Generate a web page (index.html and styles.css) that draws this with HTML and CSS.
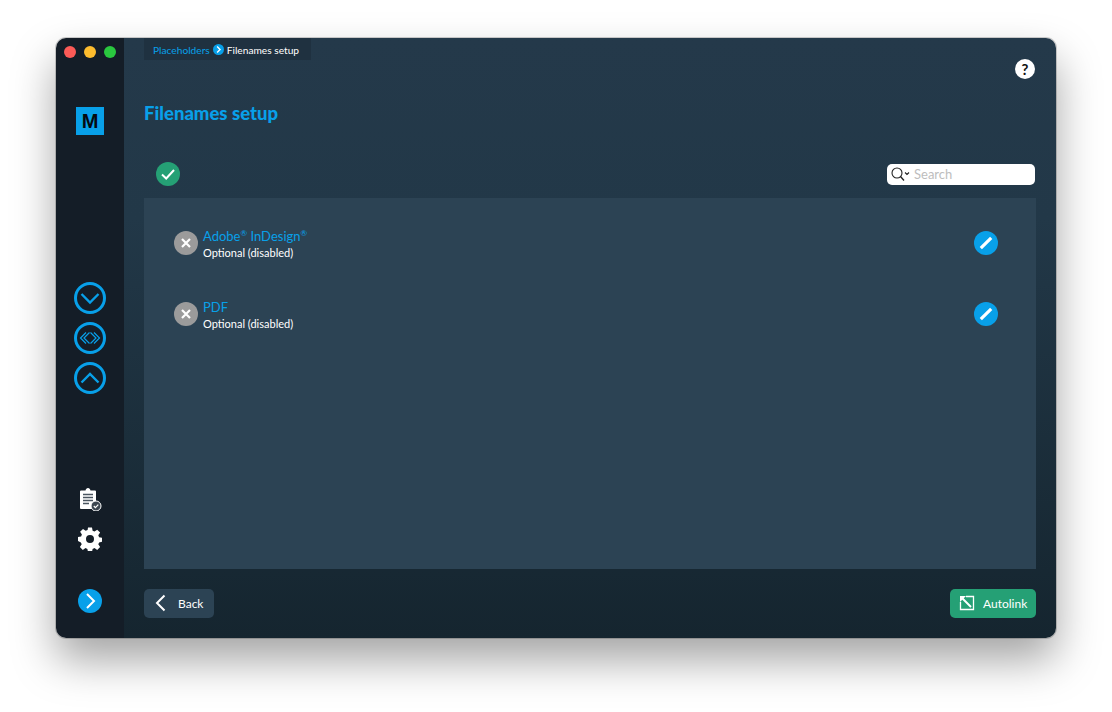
FILE: index.html
```html
<!DOCTYPE html>
<html lang="en">
<head>
  <meta charset="UTF-8" />
  <title>Filenames setup</title>
  <link rel="stylesheet" href="styles.css">
</head>
<body>
  <div class="window">
    <aside class="sidebar">
      <div class="traffic">
        <span class="light red"></span>
        <span class="light yellow"></span>
        <span class="light green"></span>
      </div>
      <div class="logo">M</div>

      <div class="nav-group">
        <svg class="nav-icon" viewBox="0 0 32 32"><circle cx="16" cy="16" r="14.500"/><path d="M7.500 12 16 20.500 24.500 12"/></svg>
        <svg class="nav-icon thin" viewBox="0 0 32 32"><circle cx="16" cy="16" r="14.500"/><path d="M12 10.500 6.500 16 12 21.500M15.500 10.500 10 16 15.500 21.500M20 10.500 25.500 16 20 21.500M16.500 10.500 22 16 16.500 21.500"/></svg>
        <svg class="nav-icon" viewBox="0 0 32 32"><circle cx="16" cy="16" r="14.500"/><path d="M7.500 20.500 16 12 24.500 20.500"/></svg>
      </div>

      <div class="tool-group">
        <svg class="clipboard" viewBox="0 0 24 24" width="24" height="24">
          <path fill="#fff" d="M3 3.500h4.500C7.800 2 8.700 1 10 1s2.200 1 2.500 2.500H17a1 1 0 0 1 1 1V22H3a1 1 0 0 1-1-1V4.500a1 1 0 0 1 1-1z"/>
          <path stroke="#4a5560" stroke-width="1.300" d="M5 7.500h10M5 10.500h10M5 13.500h10M5 16.500h6"/>
          <circle cx="18" cy="19" r="5" fill="#3c4650" stroke="#fff" stroke-width="1"/>
          <path fill="none" stroke="#fff" stroke-width="1.200" d="M15.800 19l1.600 1.600 2.900-3"/>
        </svg>
        <svg class="gear" viewBox="0 0 24 24" width="24" height="24">
          <path fill="#fff" fill-rule="evenodd" d="M10 .5h4l.6 3.200 1.900.8 2.700-1.800 2.900 2.900-1.800 2.700.8 1.900 3.200.6v4l-3.200.6-.8 1.900 1.800 2.700-2.900 2.900-2.700-1.800-1.900.8-.6 3.200h-4l-.6-3.200-1.900-.8-2.700 1.800-2.900-2.900 1.800-2.700-.8-1.900L-.1 14v-4l3.200-.6.800-1.900L2.100 4.800 5 1.900l2.700 1.800 1.900-.8zM12 8a4 4 0 1 0 0 8 4 4 0 0 0 0-8z"/>
        </svg>
      </div>

      <div class="expand">
        <svg viewBox="0 0 24 24" width="24" height="24"><circle cx="12" cy="12" r="12" fill="#08a0e9"/><path d="M9 5 16 12 9 19" fill="none" stroke="#fff" stroke-width="2"/></svg>
      </div>
    </aside>

    <main class="content">
      <div class="top-row">
        <nav class="breadcrumb">
          <span class="crumb-link">Placeholders</span>
          <svg viewBox="0 0 12 12" width="11" height="11"><circle cx="6" cy="6" r="6" fill="#08a0e9"/><path d="M4.500 2.800 7.700 6 4.500 9.200" fill="none" stroke="#fff" stroke-width="1.500"/></svg>
          <span>Filenames setup</span>
        </nav>
        <div class="help">?</div>
      </div>

      <h1>Filenames setup</h1>

      <div class="toolbar">
        <div class="ok-badge">
          <svg viewBox="0 0 24 24" width="24" height="24"><path d="M6 12.500 10.200 16.500 18 8" fill="none" stroke="#fff" stroke-width="2"/></svg>
        </div>
        <div class="search">
          <svg viewBox="0 0 20 14" width="20" height="14"><circle cx="6" cy="6" r="5" fill="none" stroke="#222" stroke-width="1.100"/><path d="M9.500 9.500 13 13.500" stroke="#222" stroke-width="1.400"/><path d="M14 5.500 16 7.500 18 5.500" fill="none" stroke="#222" stroke-width="1.100"/></svg>
          <span>Search</span>
        </div>
      </div>

      <section class="panel">
        <div class="row">
          <div class="x-badge">
            <svg viewBox="0 0 24 24" width="24" height="24"><path d="M8 8 16 16M16 8 8 16" stroke="#fff" stroke-width="2.200"/></svg>
          </div>
          <div class="row-text">
            <div class="row-title">Adobe<sup>®</sup> InDesign<sup>®</sup></div>
            <div class="row-sub">Optional (disabled)</div>
          </div>
          <div class="edit">
            <svg viewBox="0 0 24 24" width="24" height="24"><path d="M6.800 17.200 17.200 6.800" stroke="#fff" stroke-width="3.200"/></svg>
          </div>
        </div>
        <div class="row">
          <div class="x-badge">
            <svg viewBox="0 0 24 24" width="24" height="24"><path d="M8 8 16 16M16 8 8 16" stroke="#fff" stroke-width="2.200"/></svg>
          </div>
          <div class="row-text">
            <div class="row-title">PDF</div>
            <div class="row-sub">Optional (disabled)</div>
          </div>
          <div class="edit">
            <svg viewBox="0 0 24 24" width="24" height="24"><path d="M6.800 17.200 17.200 6.800" stroke="#fff" stroke-width="3.200"/></svg>
          </div>
        </div>
      </section>

      <footer class="actions">
        <div class="btn btn-back">
          <svg viewBox="0 0 12 18" width="12" height="18"><path d="M10.500 1.500 3 9 10.500 16.500" fill="none" stroke="#fff" stroke-width="2"/></svg>
          <span>Back</span>
        </div>
        <div class="btn btn-autolink">
          <svg viewBox="0 0 16 16" width="16" height="16"><path d="M7 1.500H14.500V14.500H1.500V7" fill="none" stroke="#fff" stroke-width="1.300"/><path d="M1 1h6L1 7z" fill="#fff"/><path d="M3.500 3.500 12 12" fill="none" stroke="#fff" stroke-width="2"/></svg>
          <span>Autolink</span>
        </div>
      </footer>
    </main>
  </div>
</body>
</html>
```

FILE: styles.css
```css
* {
  box-sizing: border-box;
}
html, body {
  margin: 0;
  height: 100%;
  overflow: hidden;
}
body {
  background-color: white;
  color: white;
  font-family: 'Lato', 'Liberation Sans', sans-serif;
  padding: 38px 56px;
}
.window {
  display: flex;
  width: 1000px;
  height: 600px;
  border-radius: 10px;
  overflow: hidden;
  box-shadow: 0 22px 44px rgba(0, 0, 0, 0.36), 0 0 0 1px rgba(0, 0, 0, 0.18);
}

.sidebar {
  display: flex;
  flex-direction: column;
  align-items: center;
  width: 68px;
  background-color: #141d27;
}
.traffic {
  display: flex;
  gap: 8px;
  margin-top: 8px;
}
.light {
  width: 12px;
  height: 12px;
  border-radius: 50%;
}
.red { background-color: #fc5b57; }
.yellow { background-color: #fdbc2e; }
.green { background-color: #2ac83f; }
.logo {
  display: flex;
  align-items: center;
  justify-content: center;
  width: 28px;
  height: 28px;
  margin-top: 49px;
  background-color: #08a0e9;
  color: #050a10;
  font-family: 'Liberation Sans', sans-serif;
  font-size: 20px;
  font-weight: 700;
}
.nav-group {
  display: flex;
  flex-direction: column;
  gap: 8px;
  margin-top: 147px;
}
.nav-icon {
  display: block;
  width: 32px;
  height: 32px;
  fill: none;
  stroke: #08a0e9;
  stroke-width: 3;
}
.nav-icon path {
  stroke-width: 2.400;
}
.nav-icon.thin path {
  stroke-width: 1.200;
}
.tool-group {
  display: flex;
  flex-direction: column;
  align-items: center;
  gap: 16px;
  margin-top: 93px;
}
.clipboard, .gear {
  display: block;
}
.expand {
  margin-top: 38px;
  height: 24px;
}

.content {
  flex: 1;
  display: flex;
  flex-direction: column;
  padding: 0 20px;
  background: linear-gradient(#24394a, #223848 30%, #15252f);
}
.top-row {
  display: flex;
  justify-content: space-between;
  align-items: flex-start;
}
.breadcrumb {
  display: flex;
  align-items: center;
  gap: 3px;
  height: 22px;
  padding: 1px 12px 0 9px;
  background-color: #1f3140;
  font-size: 10.200px;
}
.crumb-link {
  color: #08a0e9;
}
.help {
  width: 20px;
  height: 20px;
  margin: 21px 1px 0 0;
  border-radius: 50%;
  background-color: white;
  color: #111;
  font-size: 15px;
  font-weight: 700;
  line-height: 20px;
  text-align: center;
}
h1 {
  margin: 22px 0 0;
  color: #08a0e9;
  font-size: 18.500px;
  font-weight: 900;
  line-height: 24px;
}
.toolbar {
  display: flex;
  justify-content: space-between;
  align-items: center;
  height: 24px;
  margin-top: 37px;
  padding: 0 1px 0 12px;
}
.ok-badge {
  width: 24px;
  height: 24px;
  border-radius: 50%;
  background-color: #25a075;
}
.ok-badge svg, .x-badge svg, .edit svg {
  display: block;
}
.search {
  display: flex;
  align-items: center;
  gap: 3px;
  width: 148px;
  height: 21px;
  padding-left: 4px;
  border-radius: 5px;
  background-color: white;
  color: #bdbdbd;
  font-size: 13px;
}
.panel {
  flex: 1;
  margin-top: 12px;
  padding: 22px 38px 0 30px;
  background-color: #2c4354;
}
.row {
  display: flex;
  align-items: center;
  height: 46px;
  margin-bottom: 25px;
}
.x-badge {
  width: 24px;
  height: 24px;
  border-radius: 50%;
  background-color: #9b9b9b;
}
.row-text {
  flex: 1;
  margin: 2px 0 0 5px;
}
.row-title {
  color: #08a0e9;
  font-size: 13px;
  line-height: 16px;
}
.row-title sup {
  font-size: 8px;
  line-height: 0;
}
.row-sub {
  margin-top: 1px;
  font-size: 11px;
  line-height: 15px;
}
.edit {
  width: 24px;
  height: 24px;
  border-radius: 50%;
  background-color: #08a0e9;
}
.actions {
  display: flex;
  justify-content: space-between;
  align-items: center;
  height: 69px;
  padding-bottom: 1px;
}
.btn {
  display: flex;
  align-items: center;
  height: 29px;
  border-radius: 5px;
  font-size: 12px;
}
.btn-back {
  gap: 12px;
  width: 70px;
  padding-left: 10px;
  background-color: #2c4354;
}
.btn-autolink {
  gap: 8px;
  width: 86px;
  padding-left: 9px;
  background-color: #25a075;
}
```
